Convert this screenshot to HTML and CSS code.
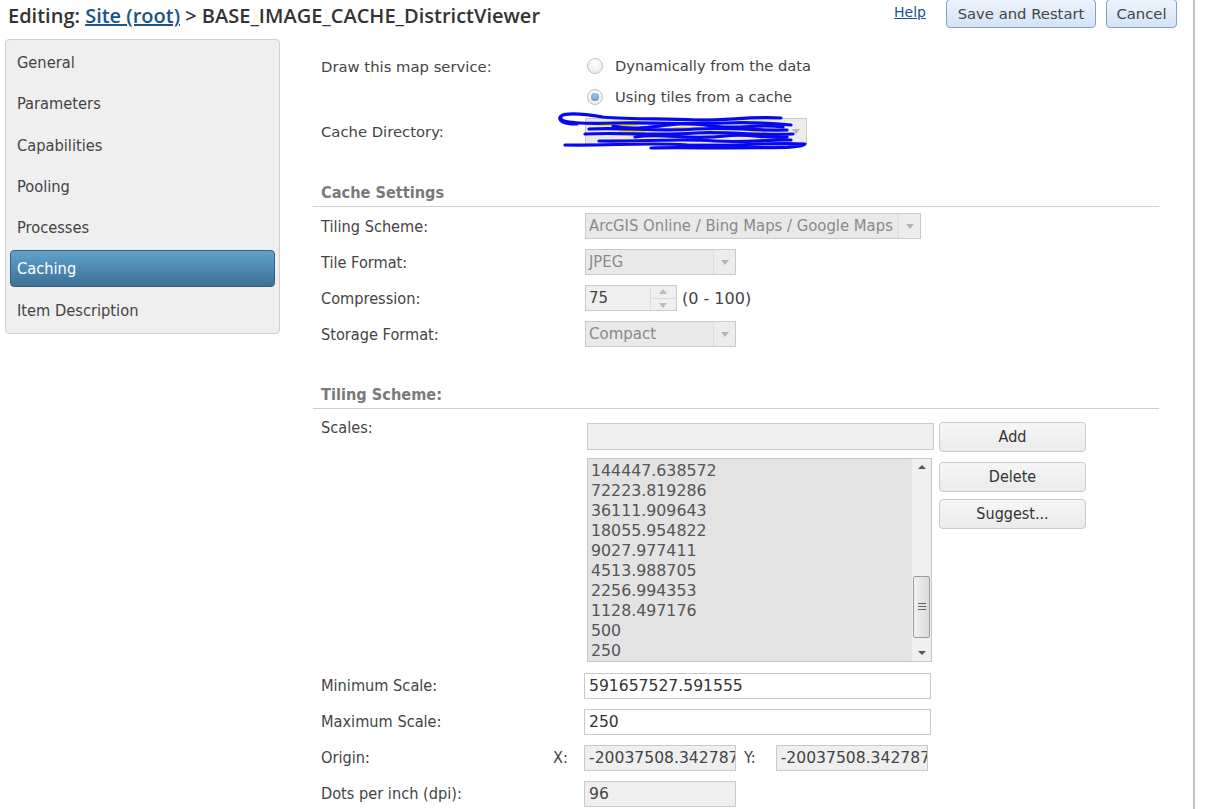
FILE: index.html
```html
<html>
<head>
<title>Editing: BASE_IMAGE_CACHE_DistrictViewer</title>
<link rel="stylesheet" href="styles.css">
</head>
<body>
<div class="page">
    <div class="topbar">
        <h1 class="title">Editing: <a href="#" class="crumb">Site (root)</a> &gt; BASE_IMAGE_CACHE_DistrictViewer</h1>
        <div class="actions">
            <a href="#" class="help">Help</a>
            <button class="topbtn save">Save and Restart</button>
            <button class="topbtn cancel">Cancel</button>
        </div>
    </div>

    <div class="layout">
        <ul class="nav">
            <li>General</li>
            <li>Parameters</li>
            <li>Capabilities</li>
            <li>Pooling</li>
            <li>Processes</li>
            <li class="selected">Caching</li>
            <li>Item Description</li>
        </ul>

        <div class="main">
            <div class="row draw">
                <div class="label wide">Draw this map service:</div>
                <div class="radios">
                    <label class="radio"><span class="dot"></span>Dynamically from the data</label>
                    <label class="radio"><span class="dot on"></span>Using tiles from a cache</label>
                </div>
            </div>
            <div class="row cachedir">
                <div class="label wide">Cache Directory:</div>
                <div class="select dirsel"><span class="val"></span><span class="arrow"></span></div>
                <!-- path hidden by hand scribble in the screenshot -->
                <svg class="scribble" width="260" height="42" viewBox="0 0 260 42">
                    <g fill="#ecdc00">
                        <rect x="42" y="12" width="40" height="4"/>
                        <rect x="64" y="20" width="26" height="3"/>
                        <rect x="118" y="17" width="28" height="3"/>
                        <rect x="56" y="29" width="34" height="3"/>
                        <rect x="150" y="25" width="20" height="3"/>
                        <rect x="196" y="21" width="14" height="3"/>
                    </g>
                    <g fill="none" stroke="#0808f0" stroke-width="3.2" stroke-linecap="round" stroke-linejoin="round">
                        <path d="M22 14 C8 14 2 10 6 6 C12 2 30 4 48 7 C80 10 110 8 140 10 C170 11 196 6 226 8"/>
                        <path d="M6 8 C4 13 30 14 60 13 C100 12 130 15 170 13 C196 12 214 13 236 15"/>
                        <path d="M34 19 C70 17 100 22 140 19 C176 17 206 21 232 20"/>
                        <path d="M30 24 C64 22 104 26 140 23 C172 21 204 26 238 24"/>
                        <path d="M44 31 C84 32 122 28 160 31 C194 33 216 29 236 30"/>
                        <path d="M10 35 C52 36 92 32 132 35 C172 37 214 32 250 34 C248 39 206 37 170 38 C150 38 120 37 96 38"/>
                        <path d="M58 16 C92 23 112 10 150 15 C182 21 200 13 228 17"/>
                        <path d="M80 27 C110 22 130 31 170 26 C194 23 212 29 232 27"/>
                    </g>
                </svg>
            </div>

            <div class="section">Cache Settings</div>
            <div class="row ctl">
                <div class="label">Tiling Scheme:</div>
                <div class="select scheme"><span class="val cond">ArcGIS Online / Bing Maps / Google Maps</span><span class="arrow"></span></div>
            </div>
            <div class="row ctl">
                <div class="label">Tile Format:</div>
                <div class="select small"><span class="val cond">JPEG</span><span class="arrow"></span></div>
            </div>
            <div class="row ctl">
                <div class="label">Compression:</div>
                <div class="spin"><span class="val">75</span><span class="spinbtns"><span class="up"></span><span class="down"></span></span></div>
                <span class="range">(0 - 100)</span>
            </div>
            <div class="row ctl">
                <div class="label">Storage Format:</div>
                <div class="select small"><span class="val">Compact</span><span class="arrow"></span></div>
            </div>

            <div class="section second">Tiling Scheme:</div>
            <div class="scales">
                <div class="label">Scales:</div>
                <div class="scalebox">
                    <div class="addrow">
                        <div class="textin"></div>
                        <button class="btn">Add</button>
                    </div>
                    <div class="listrow">
                        <div class="list">
                            <ul class="items">
                                <li>144447.638572</li>
                                <li>72223.819286</li>
                                <li>36111.909643</li>
                                <li>18055.954822</li>
                                <li>9027.977411</li>
                                <li>4513.988705</li>
                                <li>2256.994353</li>
                                <li>1128.497176</li>
                                <li>500</li>
                                <li>250</li>
                            </ul>
                            <div class="scrollbar">
                                <span class="sarrow upa"></span>
                                <div class="track"><div class="thumb"><i></i><i></i><i></i></div></div>
                                <span class="sarrow downa"></span>
                            </div>
                        </div>
                        <div class="listbtns">
                            <button class="btn">Delete</button>
                            <button class="btn">Suggest...</button>
                        </div>
                    </div>
                </div>
            </div>

            <div class="row field">
                <div class="label">Minimum Scale:</div>
                <div class="input white long">591657527.591555</div>
            </div>
            <div class="row field">
                <div class="label">Maximum Scale:</div>
                <div class="input white long">250</div>
            </div>
            <div class="row field">
                <div class="label origin">Origin:<span class="axis">X:</span></div>
                <div class="input short">-20037508.342787</div>
                <span class="axis y">Y:</span>
                <div class="input short">-20037508.342787</div>
            </div>
            <div class="row field">
                <div class="label">Dots per inch (dpi):</div>
                <div class="input short">96</div>
            </div>
        </div>
    </div>
</div>
</body>
</html>
```

FILE: styles.css
```css
html, body {
    margin: 0;
    padding: 0;
    background: #ffffff;
}
* {
    font-family: "DejaVu Sans Condensed", "DejaVu Sans", sans-serif;
    font-stretch: condensed;
    box-sizing: border-box;
}
.page {
    width: 1195px;
    height: 809px;
    overflow: hidden;
    border-right: 2px solid #c4c4c4;
    color: #444;
}

/* top bar */
.topbar {
    display: flex;
    justify-content: space-between;
    height: 39px;
}
.title {
    margin: 0;
    padding: 2px 0 0 8px;
    font-family: "Open Sans", sans-serif;
    font-stretch: normal;
    font-weight: 600;
    font-size: 20px;
    line-height: 28px;
    color: #333;
}
.crumb {
    font-family: "Open Sans", sans-serif;
    font-stretch: normal;
    color: #1c5585;
}
.actions {
    display: flex;
    align-items: flex-start;
    padding-right: 16px;
}
.help {
    font-family: "DejaVu Sans", sans-serif;
    font-stretch: normal;
    font-size: 14px;
    color: #1a5394;
    margin: 4px 20px 0 0;
}
.topbtn {
    font-family: "DejaVu Sans", sans-serif;
    font-stretch: normal;
    font-size: 14.8px;
    color: #444;
    height: 29px;
    margin-top: -1px;
    border: 1px solid #7fa3c6;
    border-radius: 4px;
    background: linear-gradient(#edf4fc, #d3e3f6);
    padding: 0 8px 1px 8px;
}
.save { width: 150px; margin-right: 10px; }
.cancel { width: 71px; }

.layout {
    display: flex;
    align-items: flex-start;
}

/* left nav */
.nav {
    list-style: none;
    margin: 0 0 0 5px;
    padding: 4px;
    width: 275px;
    background: #efefef;
    border: 1px solid #d0d0d0;
    border-radius: 4px;
}
.nav li {
    height: 37px;
    line-height: 36px;
    padding-left: 6px;
    margin-bottom: 4.3px;
    font-size: 16.3px;
    color: #444;
    border: 1px solid transparent;
    border-radius: 4px;
}
.nav li:last-child { margin-bottom: 0; }
.nav li.selected {
    color: #fff;
    background: linear-gradient(#5fa3cc, #3d7096);
    border-color: #34607f;
}

/* main area */
.main {
    margin-left: 33px;
    width: 846px;
}
.row {
    display: flex;
    align-items: center;
}
.label {
    width: 272px;
    padding-left: 8px;
    flex: none;
    font-size: 16.2px;
    color: #444;
}
.label.wide {
    font-family: "DejaVu Sans", sans-serif;
    font-stretch: normal;
    font-size: 14.8px;
}
.draw {
    align-items: flex-start;
    padding-top: 17px;
}
.draw .label { padding-top: 2px; }
.radios {
    display: flex;
    flex-direction: column;
    gap: 12px;
    padding-left: 2px;
}
.radio {
    display: flex;
    align-items: center;
    font-family: "DejaVu Sans", sans-serif;
    font-stretch: normal;
    font-size: 14.7px;
    color: #444;
    height: 19px;
}
.dot {
    width: 16px;
    height: 16px;
    border-radius: 50%;
    border: 1px solid #b9c2cb;
    background: radial-gradient(circle at 50% 35%, #ffffff, #e2e7ec);
    margin-right: 12px;
    position: relative;
}
.dot.on::after {
    content: "";
    position: absolute;
    left: 3px;
    top: 3px;
    width: 8px;
    height: 8px;
    border-radius: 50%;
    background: radial-gradient(circle at 50% 35%, #a9c8e2, #5a8ab5);
}

.cachedir {
    margin-top: 12px;
    position: relative;
}
.select {
    display: flex;
    height: 26px;
    border: 1px solid #c9c9c9;
    background: #e9e9e9;
}
.select .val {
    flex: 1;
    padding-left: 3px;
    line-height: 24px;
    font-size: 15px;
    color: #8a8a8a;
    white-space: nowrap;
    overflow: hidden;
    font-family: "DejaVu Sans", sans-serif;
    font-stretch: normal;
}
.select .val.cond {
    font-family: "DejaVu Sans Condensed", "DejaVu Sans", sans-serif;
    font-stretch: condensed;
    font-size: 16.5px;
}
.select .arrow {
    width: 22px;
    flex: none;
    border-left: 1px solid #dcdcdc;
    background: #ececec;
    position: relative;
}
.select .arrow::after {
    content: "";
    position: absolute;
    left: 7px;
    top: 10px;
    border-left: 4px solid transparent;
    border-right: 4px solid transparent;
    border-top: 5px solid #b5b5b5;
}
.dirsel { width: 222px; }
.scribble {
    position: absolute;
    left: 242px;
    top: -8px;
}

.section {
    margin-top: 39px;
    padding: 0 0 4px 8px;
    border-bottom: 1px solid #cfcfcf;
    font-weight: bold;
    font-size: 16.2px;
    line-height: 19px;
    color: #7a7a7a;
}
.section.second { margin-top: 37.5px; }
.ctl { margin-top: 10px; }
.section + .ctl { margin-top: 6px; }
.scheme { width: 336px; }
.small { width: 151px; }
.spin {
    display: flex;
    width: 92px;
    height: 26px;
    border: 1px solid #c9c9c9;
    background: #efefef;
}
.spin .val {
    flex: 1;
    padding-left: 3px;
    line-height: 24px;
    font-family: "DejaVu Sans", sans-serif;
    font-stretch: normal;
    font-size: 15px;
    color: #444;
}
.spinbtns {
    width: 26px;
    border-left: 1px solid #dcdcdc;
    display: flex;
    flex-direction: column;
}
.spinbtns span {
    flex: 1;
    position: relative;
}
.spinbtns .up { border-bottom: 1px solid #dcdcdc; }
.spinbtns .up::after, .spinbtns .down::after {
    content: "";
    position: absolute;
    left: 8px;
    border-left: 4px solid transparent;
    border-right: 4px solid transparent;
}
.spinbtns .up::after { top: 3px; border-bottom: 5px solid #bbb; }
.spinbtns .down::after { top: 4px; border-top: 5px solid #bbb; }
.range {
    margin-left: 5px;
    font-family: "DejaVu Sans", sans-serif;
    font-stretch: normal;
    font-size: 16px;
    color: #444;
}

/* scales */
.scales {
    display: flex;
    margin-top: 9px;
}
.scalebox {
    margin-left: 2px;
    margin-top: 5px;
}
.addrow, .listrow {
    display: flex;
    align-items: flex-start;
}
.textin {
    width: 347px;
    height: 27px;
    border: 1px solid #c9c9c9;
    background: #efefef;
}
.btn {
    width: 147px;
    height: 30px;
    margin-left: 5px;
    margin-top: -1px;
    border: 1px solid #c9c9c9;
    border-radius: 4px;
    background: linear-gradient(#f6f6f6, #ebebeb);
    font-size: 16px;
    color: #333;
}
.listrow { margin-top: 6px; }
.listbtns {
    display: flex;
    flex-direction: column;
    gap: 7px;
    margin-top: 4px;
}
.listbtns .btn { margin-top: 0; margin-left: 7px; }
.list {
    display: flex;
    width: 345px;
    height: 204px;
    border: 1px solid #c7c7c7;
    background: #e3e3e3;
}
.items {
    list-style: none;
    flex: 1;
    margin: 0;
    padding: 2px 0 0 3px;
}
.items li {
    height: 20px;
    line-height: 20px;
    font-family: "DejaVu Sans", sans-serif;
    font-stretch: normal;
    font-size: 15.8px;
    color: #555;
}
.scrollbar {
    width: 20px;
    background: #f0f0f0;
    border-left: 1px solid #e6e6e6;
    display: flex;
    flex-direction: column;
}
.sarrow {
    height: 17px;
    position: relative;
}
.sarrow::after {
    content: "";
    position: absolute;
    left: 6px;
    border-left: 4px solid transparent;
    border-right: 4px solid transparent;
}
.upa::after { top: 6px; border-bottom: 4px solid #555; }
.downa::after { top: 7px; border-top: 4px solid #555; }
.track {
    flex: 1;
    display: flex;
    flex-direction: column;
    justify-content: flex-end;
    padding: 0 1px 6px 1px;
}
.thumb {
    height: 62px;
    border: 1px solid #9a9a9a;
    border-radius: 2px;
    background: linear-gradient(90deg, #f2f2f2, #d9d9d9);
    display: flex;
    flex-direction: column;
    justify-content: center;
    align-items: center;
    gap: 2px;
}
.thumb i {
    display: block;
    width: 8px;
    height: 1px;
    background: #666;
}

/* bottom fields */
.field { margin-top: 10px; }
.scales + .field { margin-top: 11px; }
.input {
    height: 26px;
    border: 1px solid #c9c9c9;
    background: #efefef;
    padding-left: 4px;
    line-height: 24px;
    font-family: "DejaVu Sans", sans-serif;
    font-stretch: normal;
    font-size: 15.6px;
    color: #444;
    white-space: nowrap;
    overflow: hidden;
}
.input.white { background: #fff; color: #333; }
.long { width: 347px; flex: none; margin-left: -1px; }
.short { width: 152px; flex: none; margin-left: -1px; }
.origin {
    display: flex;
    justify-content: space-between;
    padding-right: 17px;
}
.axis {
    font-size: 16.2px;
    color: #444;
}
.axis.y { margin: 0 21px 0 8px; }
```
